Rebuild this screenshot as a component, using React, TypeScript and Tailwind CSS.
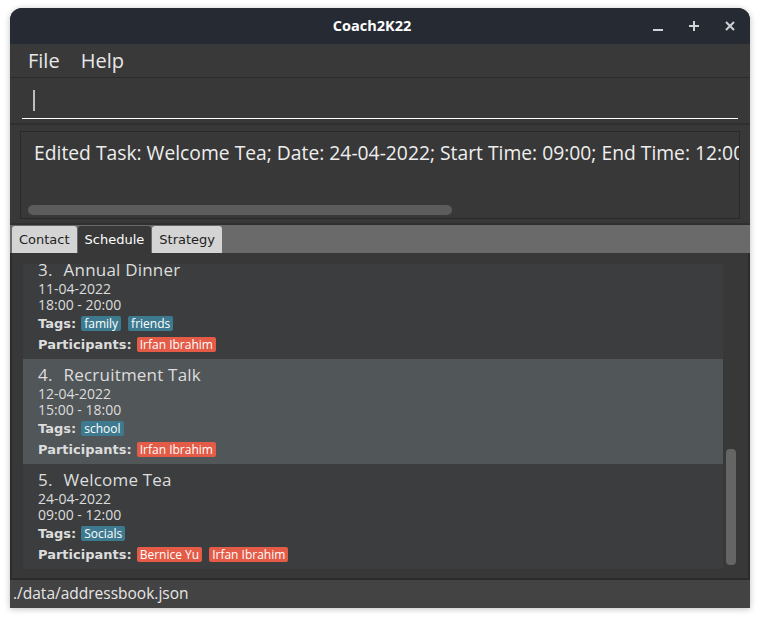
import React from "react";

type Task = {
  index: number;
  name: string;
  date: string;
  time: string;
  tags: string[];
  people: string[];
};

const tasks: Task[] = [
  { index: 3, name: "Annual Dinner", date: "11-04-2022", time: "18:00 - 20:00", tags: ["family", "friends"], people: ["Irfan Ibrahim"] },
  { index: 4, name: "Recruitment Talk", date: "12-04-2022", time: "15:00 - 18:00", tags: ["school"], people: ["Irfan Ibrahim"] },
  { index: 5, name: "Welcome Tea", date: "24-04-2022", time: "09:00 - 12:00", tags: ["Socials"], people: ["Bernice Yu", "Irfan Ibrahim"] },
];

function TaskCard({ task, odd, first }: { task: Task; odd: boolean; first?: boolean }) {
  return (
    <div
      className={`h-[105px] shrink-0 pl-[15px] pt-[5px] text-[#dddddd] ${odd ? "bg-[#515658]" : "bg-[#3c3d3f]"} ${first ? "-mt-[10px]" : ""}`}
    >
      {/* title */}
      <div className="flex h-[22px] text-[17px] leading-[22px] tracking-[0.2px]">
        <span>{task.index}.</span>
        <span className="ml-[11px]">{task.name}</span>
      </div>
      <div className="h-[16px] text-[14px] leading-[16px]">{task.date}</div>
      <div className="h-[16px] text-[14px] leading-[16px]">{task.time}</div>
      <div className="mt-[2px] flex h-[17px] items-center gap-[5px]">
        <span className="font-['DejaVu_Sans',sans-serif] text-[13px] font-bold">Tags:</span>
        {task.tags.map((t) => (
          <span key={t} className="mr-[2px] rounded-[2px] bg-[#3d7a8f] px-[3px] text-[12px] leading-[15px] text-white">
            {t}
          </span>
        ))}
      </div>
      <div className="mt-[4px] flex h-[17px] items-center gap-[5px]">
        <span className="font-['DejaVu_Sans',sans-serif] text-[13px] font-bold">Participants:</span>
        {task.people.map((p) => (
          <span key={p} className="mr-[2px] rounded-[2px] bg-[#e45b47] px-[3px] text-[12px] leading-[15px] text-white">
            {p}
          </span>
        ))}
      </div>
    </div>
  );
}

export default function App() {
  return (
    <div className="h-[619px] w-[760px] bg-white pl-[10px] pt-[8px] font-['Open_Sans',sans-serif]">
      <div className="flex h-[600px] w-[740px] flex-col overflow-hidden rounded-t-[12px] bg-[#383838] shadow-[0_1px_6px_rgba(0,0,0,0.25)]">
        {/* Title bar */}
        <div className="relative flex h-[36px] shrink-0 items-center justify-center bg-[#262a33] pr-[16px]">
          <span className="text-[14.5px] font-bold text-white">Coach2K22</span>
          <div className="absolute right-[14px] top-0 flex h-full items-center gap-[24px] text-[#d0d2d6]">
            <svg width="12" height="12" viewBox="0 0 12 12">
              <rect x="1" y="9" width="10" height="2" fill="currentColor" />
            </svg>
            <svg width="12" height="12" viewBox="0 0 12 12">
              <rect x="5" y="1" width="2" height="10" fill="currentColor" />
              <rect x="1" y="5" width="10" height="2" fill="currentColor" />
            </svg>
            <svg width="12" height="12" viewBox="0 0 12 12">
              <path d="M2 2 L10 10 M10 2 L2 10" stroke="currentColor" strokeWidth="2" />
            </svg>
          </div>
        </div>

        {/* Menu bar */}
        <div className="flex h-[34px] shrink-0 items-center gap-[21px] border-b border-[#2b2b2b] bg-[#393939] pl-[18px] text-[20px] text-[#e8e8e8]">
          <span>File</span>
          <span>Help</span>
        </div>

        {/* Command box */}
        <div className="h-[47px] shrink-0 border-b-2 border-[#2f2f2f] px-[12px] pt-[11px]">
          <div className="flex h-[30px] items-start border-b border-white pl-[11px]">
            <div className="mt-[1px] h-[21px] w-[2px] bg-[#bdbdbd]" />
          </div>
        </div>

        {/* Result display */}
        <div className="h-[100px] shrink-0 border-b-2 border-[#2f2f2f] px-[10px] pt-[6px]">
          <div className="h-[88px] overflow-hidden border border-[#2a2a2a] bg-[#383838] pt-[9px]">
            <div className="whitespace-nowrap pl-[13px] text-[19.3px] leading-[24px] text-[#eeeeee]">
              Edited Task: Welcome Tea; Date: 24-04-2022; Start Time: 09:00; End Time: 12:00
            </div>
            <div className="ml-[7px] mt-[40px] h-[10px] w-[424px] rounded-[5px] bg-[#5c5c5c]" />
          </div>
        </div>

        {/* Tabs */}
        <div className="flex h-[28px] shrink-0 items-end gap-[1px] bg-[#6a6a6a] pl-[2px] font-['DejaVu_Sans',sans-serif] text-[13px]">
          <div className="flex h-[27px] items-center rounded-t-[3px] bg-[#d4d4d4] px-[7px] text-[#1e1e1e]">Contact</div>
          <div className="flex h-[27px] items-center rounded-t-[3px] bg-[#383838] px-[7px] text-white">Schedule</div>
          <div className="flex h-[27px] items-center rounded-t-[3px] bg-[#d4d4d4] px-[7px] text-[#1e1e1e]">Strategy</div>
        </div>

        {/* Task list */}
        <div className="flex h-[327px] shrink-0 border-x-2 border-b-2 border-[#2b2b2b] bg-[#383838] pb-[9px] pt-[11px]">
          <div className="ml-[11px] flex w-[700px] flex-col overflow-hidden">
            {tasks.map((t, i) => (
              <TaskCard key={t.index} task={t} odd={i % 2 === 1} first={i === 0} />
            ))}
          </div>
          <div className="flex flex-1 flex-col justify-end px-[3px] pb-[4px]">
            <div className="h-[116px] w-[10px] rounded-[4px] bg-[#656565]" />
          </div>
        </div>

        {/* Status bar */}
        <div className="flex h-[28px] shrink-0 items-center bg-[#434343] pl-[3px] text-[15.5px] text-[#e6e6e6]">
          ./data/addressbook.json
        </div>
      </div>
    </div>
  );
}
